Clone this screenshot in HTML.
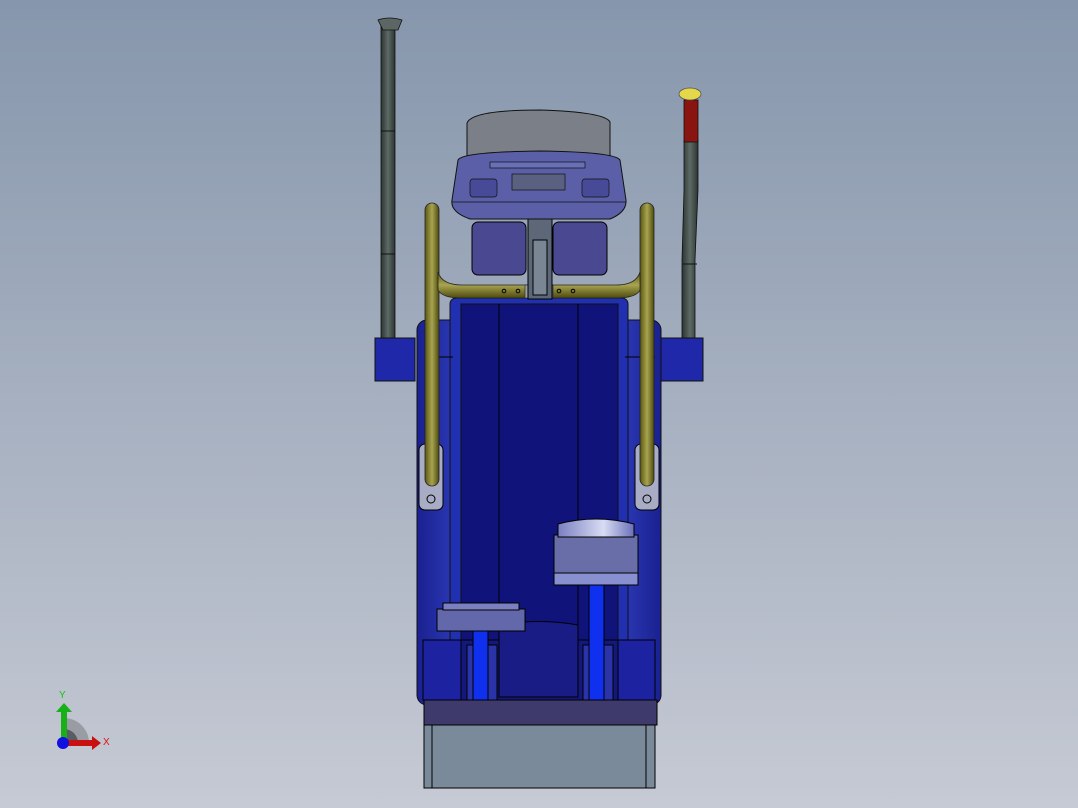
<!DOCTYPE html>
<html><head><style>
html,body{margin:0;padding:0;width:1078px;height:808px;overflow:hidden}
</style></head><body>
<svg width="1078" height="808" viewBox="0 0 1078 808" xmlns="http://www.w3.org/2000/svg">
<defs>
<linearGradient id="bg" x1="0" y1="0" x2="0" y2="1"><stop offset="0" stop-color="#8696ac"/><stop offset="1" stop-color="#c6cad4"/></linearGradient>
<linearGradient id="rail" x1="0" y1="0" x2="1" y2="0"><stop offset="0" stop-color="#5a5612"/><stop offset=".5" stop-color="#a8a450"/><stop offset="1" stop-color="#4e4a0e"/></linearGradient>
<linearGradient id="railh" x1="0" y1="0" x2="0" y2="1"><stop offset="0" stop-color="#5a5612"/><stop offset=".5" stop-color="#a8a450"/><stop offset="1" stop-color="#4e4a0e"/></linearGradient>
<linearGradient id="pole" x1="0" y1="0" x2="1" y2="0"><stop offset="0" stop-color="#2c3432"/><stop offset=".5" stop-color="#5d6a66"/><stop offset="1" stop-color="#2c3432"/></linearGradient>
<linearGradient id="body" x1="0" y1="0" x2="1" y2="0"><stop offset="0" stop-color="#1a2090"/><stop offset=".2" stop-color="#3040c0"/><stop offset=".5" stop-color="#1c28a0"/><stop offset=".8" stop-color="#3040c0"/><stop offset="1" stop-color="#1a2090"/></linearGradient>
<linearGradient id="ped" x1="0" y1="0" x2="1" y2="0"><stop offset="0" stop-color="#7a80c0"/><stop offset=".6" stop-color="#d8dcf4"/><stop offset="1" stop-color="#6a70b8"/></linearGradient>
</defs>
<rect width="1078" height="808" fill="url(#bg)"/>

<rect x="381" y="26" width="14" height="316" fill="url(#pole)" stroke="#111" stroke-width=".8"/>
<path d="M378 20 Q389 16 402 20 L398 30 L383 30 Z" fill="#5c6664" stroke="#111" stroke-width=".8"/>
<line x1="381" y1="131" x2="395" y2="131" stroke="#111"/><line x1="381" y1="254" x2="395" y2="254" stroke="#111"/>
<path d="M684 140 L698 140 L698 190 L695 260 L695 345 L682 345 L682 260 L684 190 Z" fill="url(#pole)" stroke="#111" stroke-width=".8"/>
<rect x="684" y="100" width="14" height="42" fill="#8a1410" stroke="#111" stroke-width=".8"/>
<ellipse cx="690" cy="94" rx="11" ry="6" fill="#e4d84a" stroke="#555" stroke-width=".8"/>
<line x1="683" y1="264" x2="697" y2="264" stroke="#111"/>

<rect x="375" y="338" width="40" height="43" fill="#1f28a8" stroke="#111"/>
<rect x="661" y="338" width="42" height="43" fill="#1f28a8" stroke="#111"/>

<rect x="417" y="320" width="244" height="385" rx="10" fill="url(#body)" stroke="#111"/>
<rect x="450" y="298" width="178" height="402" rx="6" fill="#2030b0" stroke="#111"/>
<rect x="461" y="304" width="157" height="396" fill="#10137a" stroke="#111"/>
<line x1="499" y1="304" x2="499" y2="700" stroke="#000"/>
<line x1="578" y1="304" x2="578" y2="700" stroke="#000"/>
<line x1="425" y1="357" x2="453" y2="357" stroke="#000"/><line x1="625" y1="357" x2="655" y2="357" stroke="#000"/>

<rect x="423" y="640" width="232" height="60" fill="#1c22a0" stroke="#000"/>
<rect x="461" y="640" width="157" height="60" fill="#14187a" stroke="#000"/>
<path d="M499 625 Q540 618 578 625 L578 697 L499 697 Z" fill="#181c84" stroke="#000"/>
<rect x="467" y="645" width="30" height="55" fill="#2a34a8" stroke="#000"/>
<rect x="583" y="645" width="30" height="55" fill="#2a34a8" stroke="#000"/>
<rect x="473" y="624" width="15" height="76" fill="#1030f0" stroke="#000"/>
<rect x="589" y="585" width="15" height="115" fill="#1030f0" stroke="#000"/>

<rect x="437" y="609" width="88" height="22" fill="#6268aa" stroke="#000"/>
<rect x="443" y="603" width="76" height="7" fill="#7a80c0" stroke="#000"/>
<rect x="554" y="535" width="84" height="50" fill="#6a6ea8" stroke="#000"/>
<path d="M558 537 L558 524 Q596 514 634 524 L634 537 Z" fill="url(#ped)" stroke="#000"/>
<rect x="554" y="573" width="84" height="12" fill="#8890d0" stroke="#000"/>

<rect x="424" y="700" width="233" height="25" fill="#3e3a6c" stroke="#000"/>
<rect x="424" y="725" width="231" height="63" fill="#7a8a9a" stroke="#000"/>
<line x1="432" y1="725" x2="432" y2="788" stroke="#000"/><line x1="646" y1="725" x2="646" y2="788" stroke="#000"/>

<rect x="419" y="444" width="24" height="66" rx="6" fill="#a8acc4" stroke="#000"/>
<circle cx="431" cy="499" r="4" fill="none" stroke="#000"/>
<rect x="635" y="444" width="24" height="66" rx="6" fill="#a8acc4" stroke="#000"/>
<circle cx="647" cy="499" r="4" fill="none" stroke="#000"/>

<rect x="425" y="203" width="14" height="283" rx="7" fill="url(#rail)" stroke="#222" stroke-width=".8"/>
<rect x="640" y="203" width="14" height="283" rx="7" fill="url(#rail)" stroke="#222" stroke-width=".8"/>
<path d="M438 272 Q442 285 462 285 L616 285 Q636 285 640 272 L640 290 Q636 298 616 298 L462 298 Q442 298 438 290 Z" fill="url(#railh)" stroke="#222" stroke-width=".8"/>
<rect x="525" y="285" width="28" height="13" fill="#9aa0a0" stroke="#222" stroke-width=".6"/>
<circle cx="504" cy="291" r="1.8" fill="none" stroke="#000"/><circle cx="518" cy="291" r="1.8" fill="none" stroke="#000"/>
<circle cx="559" cy="291" r="1.8" fill="none" stroke="#000"/><circle cx="573" cy="291" r="1.8" fill="none" stroke="#000"/>

<rect x="528" y="207" width="24" height="92" fill="#5c6878" stroke="#000"/>
<rect x="533" y="240" width="14" height="55" fill="#7a8694" stroke="#000"/>
<rect x="472" y="222" width="54" height="53" rx="6" fill="#4a4890" stroke="#000"/>
<rect x="553" y="222" width="54" height="53" rx="6" fill="#4a4890" stroke="#000"/>

<path d="M467 123 Q472 110 540 110 Q605 112 610 122 L610 156 L467 156 Z" fill="#7a7f88" stroke="#111"/>
<path d="M458 160 Q462 152 540 151 Q615 152 620 160 L626 200 Q627 212 610 219 L470 219 Q450 212 452 200 Z" fill="#5a5fa8" stroke="#111"/>
<rect x="490" y="162" width="95" height="6" fill="#6870b8" stroke="#111" stroke-width=".7"/>
<rect x="512" y="174" width="53" height="16" fill="#5a6080" stroke="#111" stroke-width=".7"/>
<rect x="470" y="179" width="27" height="18" rx="3" fill="#474a96" stroke="#111" stroke-width=".7"/>
<rect x="582" y="179" width="27" height="18" rx="3" fill="#474a96" stroke="#111" stroke-width=".7"/>
<line x1="452" y1="202" x2="626" y2="202" stroke="#111" stroke-width=".7"/>

<path d="M64 718 A25 25 0 0 1 89 743 L64 743 Z" fill="#9a9ca4"/>
<path d="M64 729 A14 14 0 0 1 78 743 L64 743 Z" fill="#5a5c64"/>
<rect x="61" y="710" width="6" height="32" fill="#18b018"/>
<path d="M56 712 L64 703 L72 712 Z" fill="#18b018"/>
<rect x="64" y="740" width="29" height="6" fill="#c81010"/>
<path d="M92 736 L101 743 L92 750 Z" fill="#c81010"/>
<circle cx="63" cy="743" r="6" fill="#1010e0"/>
<text x="59" y="698" font-family="Liberation Sans, sans-serif" font-size="10" fill="#18c018">Y</text>
<text x="103" y="745" font-family="Liberation Sans, sans-serif" font-size="10" fill="#e01010">X</text>
</svg>
</body></html>
